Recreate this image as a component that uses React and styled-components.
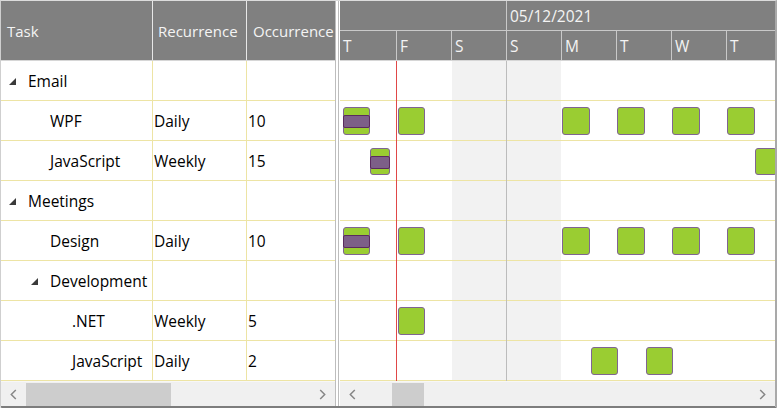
import React from "react";
import styled, { createGlobalStyle } from "styled-components";

const Global = createGlobalStyle`
  html, body { margin: 0; padding: 0; background: #fff; }
  body { font-family: "Open Sans", "Noto Sans", sans-serif; }
  * { box-sizing: border-box; }
`;

const YELLOW = "#ede4a4";
const COLS = "152px 94px 88px";
const FS = "15.5px";

const Frame = styled.div`
  display: flex;
  width: 777px;
  height: 408px;
  border-top: 1px solid #dcdcdc;
  border-left: 1px solid #cfcfcf;
  border-right: 2px solid #a9a9a9;
  border-bottom: 2px solid #7d7d7d;
  border-bottom-left-radius: 2px;
  overflow: hidden;
  background: #fff;
`;

const GridPane = styled.div`
  width: 334px;
  flex: none;
  display: flex;
  flex-direction: column;
`;

const GridHeader = styled.div`
  display: grid;
  grid-template-columns: ${COLS};
  height: 60px;
  background: #808080;
  border-bottom: 1px solid #d6d6d6;
`;

const HeaderCell = styled.div`
  display: flex;
  align-items: center;
  padding-left: ${(p) => p.$pad}px;
  color: #f4f4f4;
  font-size: 15px;
  white-space: nowrap;
  overflow: hidden;
  border-right: ${(p) => (p.$last ? "none" : "1px solid #e8e8e8")};
`;

const Row = styled.div`
  display: grid;
  grid-template-columns: ${COLS};
  height: 40px;
  border-bottom: 1px solid ${YELLOW};
`;

const Cell = styled.div`
  display: flex;
  align-items: center;
  padding-left: 1px;
  font-size: ${FS};
  color: #000;
  white-space: nowrap;
  overflow: hidden;
  border-right: ${(p) => (p.$last ? "none" : `1px solid ${YELLOW}`)};
`;

const TaskCell = styled(Cell)`
  padding-left: ${(p) => 5 + p.$level * 22}px;
`;

const Expander = styled.span`
  width: 22px;
  flex: none;
  display: flex;
  align-items: center;
  padding-left: 3px;
  padding-top: 1px;
`;

const Splitter = styled.div`
  width: 4px;
  flex: none;
  margin-right: 1px;
  border-left: 1px solid #bdbdbd;
  border-right: 1px solid #bdbdbd;
  background: #fff;
`;

const GanttPane = styled.div`
  width: 435px;
  flex: none;
  display: flex;
  flex-direction: column;
  overflow: hidden;
`;

const GanttHeader = styled.div`
  height: 60px;
  flex: none;
  background: #808080;
  border-bottom: 1px solid #d6d6d6;
  display: flex;
  flex-direction: column;
`;

const HeaderBand = styled.div`
  display: flex;
  height: ${(p) => p.$h}px;
  flex: none;
  border-bottom: ${(p) => (p.$line ? "1px solid #c9c9c9" : "none")};
`;

const WeekCell = styled.div`
  width: ${(p) => p.$w}px;
  flex: none;
  display: flex;
  align-items: center;
  padding-left: 3px;
  color: #f4f4f4;
  font-size: ${FS};
  white-space: nowrap;
  border-left: ${(p) => (p.$first ? "none" : "1px solid #c9c9c9")};
`;

const DayCell = styled.div`
  width: ${(p) => (p.$first ? 56 : 55)}px;
  flex: none;
  display: flex;
  align-items: center;
  padding-left: 3px;
  color: #f4f4f4;
  font-size: ${FS};
  border-left: ${(p) => (p.$first ? "none" : "1px solid #c9c9c9")};
`;

const GanttBody = styled.div`
  position: relative;
  height: 320px;
  flex: none;
  background: linear-gradient(
    to right,
    #fff 112px,
    #f2f2f2 112px,
    #f2f2f2 221px,
    #fff 221px
  );
`;

const GanttRow = styled.div`
  position: relative;
  height: 40px;
  border-bottom: 1px solid ${YELLOW};
`;

const Bar = styled.div`
  position: absolute;
  top: 6px;
  height: 28px;
  background: #9acd32;
  border: 1px solid #7f6592;
  border-radius: 3px;
`;

const Progress = styled.div`
  position: absolute;
  left: -1px;
  right: -1px;
  top: 7px;
  height: 13px;
  background: #7d5f88;
  border: 1px solid #5a2b5e;
  border-radius: 2px;
`;

const VLine = styled.div`
  position: absolute;
  top: 0;
  bottom: 0;
  width: 1px;
  z-index: 2;
  background: ${(p) => p.$color};
`;

const ScrollBar = styled.div`
  height: 25px;
  flex: none;
  display: flex;
  background: #f0f0f0;
  border-top: 1px solid #f7f7f7;
`;

const ArrowButton = styled.div`
  width: 25px;
  flex: none;
  display: flex;
  align-items: center;
  justify-content: center;
`;

const Thumb = styled.div`
  width: ${(p) => p.$w}px;
  margin-left: ${(p) => p.$offset}px;
  margin-top: 1px;
  flex: none;
  background: #cdcdcd;
`;

const Fill = styled.div`
  flex: 1;
`;

const Triangle = () => (
  <svg width="7" height="7" viewBox="0 0 7 7">
    <path d="M7 0 L7 7 L0 7 Z" fill="#3a3a3a" />
  </svg>
);

const Chevron = ({ dir }) => (
  <svg width="7" height="11" viewBox="0 0 7 11">
    <path
      d={dir === "left" ? "M5.8 1 L1.3 5.5 L5.8 10" : "M1.2 1 L5.7 5.5 L1.2 10"}
      stroke="#868686"
      strokeWidth="1.5"
      fill="none"
    />
  </svg>
);

const DAILY = [
  { left: 3, w: 27, p: true },
  { left: 58, w: 27 },
  { left: 222, w: 28 },
  { left: 277, w: 28 },
  { left: 332, w: 28 },
  { left: 387, w: 28 },
];

const rows = [
  { level: 0, parent: true, name: "Email", rec: "", occ: "", bars: [] },
  { level: 1, name: "WPF", rec: "Daily", occ: "10", bars: DAILY },
  {
    level: 1,
    name: "JavaScript",
    rec: "Weekly",
    occ: "15",
    bars: [
      { left: 30, w: 20, p: true, top: 7, h: 27 },
      { left: 415, w: 22, top: 7, h: 27 },
    ],
  },
  { level: 0, parent: true, name: "Meetings", rec: "", occ: "", bars: [] },
  { level: 1, name: "Design", rec: "Daily", occ: "10", bars: DAILY },
  { level: 1, parent: true, name: "Development", rec: "", occ: "", bars: [] },
  { level: 2, name: ".NET", rec: "Weekly", occ: "5", bars: [{ left: 58, w: 27 }] },
  {
    level: 2,
    name: "JavaScript",
    rec: "Daily",
    occ: "2",
    bars: [
      { left: 251, w: 27 },
      { left: 306, w: 27 },
    ],
  },
];

const days = ["T", "F", "S", "S", "M", "T", "W", "T"];

export default function App() {
  return (
    <>
      <Global />
      <Frame>
        <GridPane>
          <GridHeader>
            <HeaderCell $pad={6}>Task</HeaderCell>
            <HeaderCell $pad={5}>Recurrence</HeaderCell>
            <HeaderCell $pad={6} $last>
              Occurrence
            </HeaderCell>
          </GridHeader>
          {rows.map((r, i) => (
            <Row key={i}>
              <TaskCell $level={r.parent ? r.level : r.level + 1}>
                {r.parent && (
                  <Expander>
                    <Triangle />
                  </Expander>
                )}
                {r.name}
              </TaskCell>
              <Cell>{r.rec}</Cell>
              <Cell $last>{r.occ}</Cell>
            </Row>
          ))}
          <ScrollBar>
            <ArrowButton>
              <Chevron dir="left" />
            </ArrowButton>
            <Thumb $w={145} $offset={0} />
            <Fill />
            <ArrowButton>
              <Chevron dir="right" />
            </ArrowButton>
          </ScrollBar>
        </GridPane>
        <Splitter />
        <GanttPane>
          <GanttHeader>
            <HeaderBand $h={30} $line>
              <WeekCell $w={166} $first />
              <WeekCell $w={269}>05/12/2021</WeekCell>
            </HeaderBand>
            <HeaderBand $h={29}>
              {days.map((d, i) => (
                <DayCell key={i} $first={i === 0}>
                  {d}
                </DayCell>
              ))}
            </HeaderBand>
          </GanttHeader>
          <GanttBody>
            <VLine $color="#bcbcbc" style={{ left: 166 }} />
            <VLine $color="#e04848" style={{ left: 56 }} />
            {rows.map((r, i) => (
              <GanttRow key={i}>
                {r.bars.map((b, j) => (
                  <Bar
                    key={j}
                    style={{
                      left: b.left,
                      width: b.w,
                      top: b.top ?? 6,
                      height: b.h ?? 28,
                    }}
                  >
                    {b.p && <Progress />}
                  </Bar>
                ))}
              </GanttRow>
            ))}
          </GanttBody>
          <ScrollBar>
            <ArrowButton>
              <Chevron dir="left" />
            </ArrowButton>
            <Thumb $w={32} $offset={27} />
            <Fill />
            <ArrowButton>
              <Chevron dir="right" />
            </ArrowButton>
          </ScrollBar>
        </GanttPane>
      </Frame>
    </>
  );
}
